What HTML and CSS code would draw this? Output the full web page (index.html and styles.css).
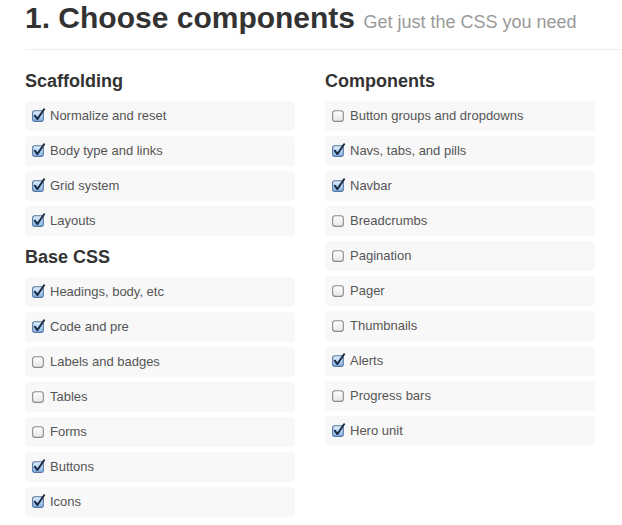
FILE: index.html
```html
<!DOCTYPE html>
<html>
<head>
<meta charset="utf-8">
<link rel="stylesheet" href="styles.css">
</head>
<body>
<svg width="0" height="0" class="defs">
  <defs>
    <linearGradient id="gOn" x1="0" y1="0" x2="0" y2="1">
      <stop offset="0" stop-color="#e3f0fc"/>
      <stop offset="0.5" stop-color="#b4d4f3"/>
      <stop offset="1" stop-color="#7fb1e6"/>
    </linearGradient>
    <linearGradient id="gOff" x1="0" y1="0" x2="0" y2="1">
      <stop offset="0" stop-color="#ffffff"/>
      <stop offset="1" stop-color="#e6e6e6"/>
    </linearGradient>
    <symbol id="on" viewBox="0 0 14 14">
      <rect x="1.5" y="2.5" width="10" height="10" rx="2" fill="url(#gOn)" stroke="#56769e"/>
      <path d="M3.6 7.2 L6 10.3 L12.2 1.2" fill="none" stroke="#1c2b44" stroke-width="1.9" stroke-linecap="round" stroke-linejoin="round"/>
    </symbol>
    <symbol id="off" viewBox="0 0 14 14">
      <rect x="1.5" y="2.5" width="10" height="10" rx="2.5" fill="url(#gOff)" stroke="#8a8a8a"/>
    </symbol>
  </defs>
</svg>
<div class="page">
  <div class="page-header">
    <h1>1. Choose components <small>Get just the CSS you need</small></h1>
  </div>
  <div class="cols">
    <div class="col">
      <h3>Scaffolding</h3>
      <label class="checkbox"><svg class="cb"><use href="#on"/></svg>Normalize and reset</label>
      <label class="checkbox"><svg class="cb"><use href="#on"/></svg>Body type and links</label>
      <label class="checkbox"><svg class="cb"><use href="#on"/></svg>Grid system</label>
      <label class="checkbox"><svg class="cb"><use href="#on"/></svg>Layouts</label>
      <h3 class="next">Base CSS</h3>
      <label class="checkbox"><svg class="cb"><use href="#on"/></svg>Headings, body, etc</label>
      <label class="checkbox"><svg class="cb"><use href="#on"/></svg>Code and pre</label>
      <label class="checkbox"><svg class="cb"><use href="#off"/></svg>Labels and badges</label>
      <label class="checkbox"><svg class="cb"><use href="#off"/></svg>Tables</label>
      <label class="checkbox"><svg class="cb"><use href="#off"/></svg>Forms</label>
      <label class="checkbox"><svg class="cb"><use href="#on"/></svg>Buttons</label>
      <label class="checkbox"><svg class="cb"><use href="#on"/></svg>Icons</label>
    </div>
    <div class="col">
      <h3>Components</h3>
      <label class="checkbox"><svg class="cb"><use href="#off"/></svg>Button groups and dropdowns</label>
      <label class="checkbox"><svg class="cb"><use href="#on"/></svg>Navs, tabs, and pills</label>
      <label class="checkbox"><svg class="cb"><use href="#on"/></svg>Navbar</label>
      <label class="checkbox"><svg class="cb"><use href="#off"/></svg>Breadcrumbs</label>
      <label class="checkbox"><svg class="cb"><use href="#off"/></svg>Pagination</label>
      <label class="checkbox"><svg class="cb"><use href="#off"/></svg>Pager</label>
      <label class="checkbox"><svg class="cb"><use href="#off"/></svg>Thumbnails</label>
      <label class="checkbox"><svg class="cb"><use href="#on"/></svg>Alerts</label>
      <label class="checkbox"><svg class="cb"><use href="#off"/></svg>Progress bars</label>
      <label class="checkbox"><svg class="cb"><use href="#on"/></svg>Hero unit</label>
    </div>
  </div>
</div>
</body>
</html>
```

FILE: styles.css
```css
html, body {
  margin: 0;
  padding: 0;
  background: #fff;
}
body {
  font-family: "Liberation Sans", Arial, Helvetica, sans-serif;
  color: #333;
  overflow: hidden;
}
.defs {
  position: absolute;
  width: 0;
  height: 0;
}
.page {
  padding-left: 25px;
}
.page-header {
  padding-bottom: 13px;
  border-bottom: 1px solid #eee;
  margin-bottom: 18px;
}
h1 {
  margin: 0;
  font-size: 30px;
  line-height: 36px;
  font-weight: bold;
  color: #333;
}
h1 small {
  font-size: 18px;
  line-height: 1;
  font-weight: normal;
  color: #999;
}
.cols {
  display: grid;
  grid-template-columns: 270px 270px;
  column-gap: 30px;
}
.col {
  display: flex;
  flex-direction: column;
}
h3 {
  margin: 0 0 6px;
  font-size: 18px;
  line-height: 27px;
  font-weight: bold;
  color: #333;
}
h3.next {
  margin-top: 3px;
}
.checkbox {
  display: flex;
  align-items: center;
  gap: 4px;
  padding: 6px 10px 6px 6px;
  margin-bottom: 5px;
  font-size: 13px;
  line-height: 18px;
  color: #555;
  background: #f8f8f8;
  border-radius: 4px;
}
.cb {
  width: 15px;
  height: 15px;
  flex: none;
  margin-top: -2px;
}
```
